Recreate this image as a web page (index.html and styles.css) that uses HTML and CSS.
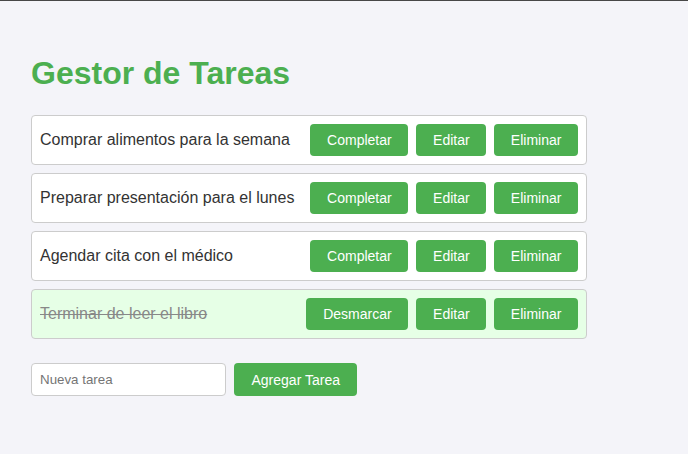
FILE: index.html
```html
<!DOCTYPE html>
<html lang="es">
<head>
<meta charset="utf-8">
<title>Gestor de Tareas</title>
<link rel="stylesheet" href="styles.css">
</head>
<body>
<div class="page">
  <h1 class="title">Gestor de Tareas</h1>
  <ul class="tasks">
    <li class="task">
      <span class="task-text">Comprar alimentos para la semana</span>
      <div class="actions">
        <button class="btn btn-main">Completar</button>
        <button class="btn">Editar</button>
        <button class="btn">Eliminar</button>
      </div>
    </li>
    <li class="task">
      <span class="task-text">Preparar presentación para el lunes</span>
      <div class="actions">
        <button class="btn btn-main">Completar</button>
        <button class="btn">Editar</button>
        <button class="btn">Eliminar</button>
      </div>
    </li>
    <li class="task">
      <span class="task-text">Agendar cita con el médico</span>
      <div class="actions">
        <button class="btn btn-main">Completar</button>
        <button class="btn">Editar</button>
        <button class="btn">Eliminar</button>
      </div>
    </li>
    <li class="task task-done">
      <span class="task-text">Terminar de leer el libro</span>
      <div class="actions">
        <button class="btn btn-main">Desmarcar</button>
        <button class="btn">Editar</button>
        <button class="btn">Eliminar</button>
      </div>
    </li>
  </ul>
  <div class="add-row">
    <input class="new-input" type="text" placeholder="Nueva tarea">
    <button class="btn btn-add">Agregar Tarea</button>
  </div>
</div>
</body>
</html>
```
FILE: styles.css
```css
html, body {
  margin: 0;
  padding: 0;
  background: #f4f4f9;
}
.page {
  border-top: 1px solid #474747;
  padding: 0 31px;
  font-family: "Liberation Sans", Arial, sans-serif;
  color: #333;
  min-height: 453px;
  box-sizing: border-box;
}
.title {
  margin: 54px 0 23px;
  font-size: 32px;
  font-weight: bold;
  color: #4caf50;
  line-height: 37px;
}
.tasks {
  list-style: none;
  margin: 0;
  padding: 0;
  width: 556px;
}
.task {
  display: flex;
  align-items: center;
  justify-content: space-between;
  background: #fff;
  border: 1px solid #cccccc;
  border-radius: 4px;
  padding: 8px;
  margin-bottom: 8px;
  height: 50px;
  box-sizing: border-box;
}
.task-text {
  font-size: 16px;
  color: #333;
}
.task-done {
  background: #e6ffe6;
}
.task-done .task-text {
  text-decoration: line-through;
  color: #888;
}
.actions {
  display: flex;
  gap: 8px;
}
.btn {
  font-family: "Liberation Sans", Arial, sans-serif;
  font-size: 14px;
  line-height: 16px;
  height: 32px;
  padding: 8px 16.6px;
  border: none;
  border-radius: 4px;
  background: #4caf50;
  color: #fff;
  cursor: pointer;
}
.btn-main {
  padding: 8px 16.8px;
}
.add-row {
  display: flex;
  align-items: center;
  gap: 8px;
  margin-top: 24px;
}
.new-input {
  width: 195px;
  height: 33px;
  box-sizing: border-box;
  padding: 8px;
  border: 1px solid #cccccc;
  border-radius: 4px;
  font-family: "Liberation Sans", Arial, sans-serif;
  font-size: 13.33px;
  background: #fff;
}
.new-input::placeholder {
  color: #757575;
}
.btn-add {
  height: 33px;
  padding: 8px 17.5px;
}
```
